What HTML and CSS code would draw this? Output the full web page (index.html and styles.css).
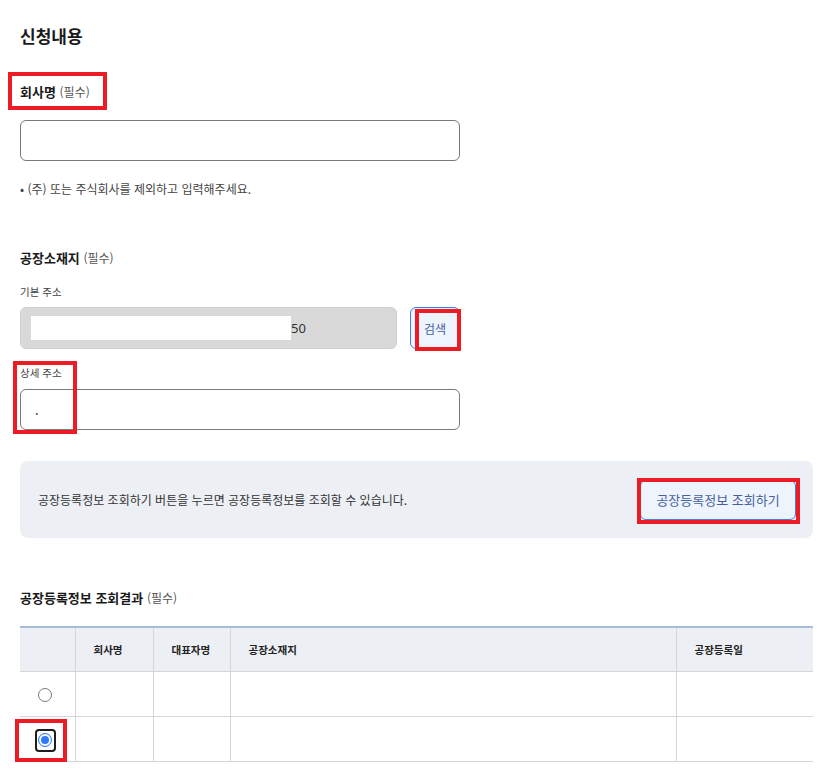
FILE: index.html
```html
<!DOCTYPE html>
<html lang="ko">
<head>
<meta charset="utf-8">
<title>신청내용</title>
<link rel="stylesheet" href="styles.css">
</head>
<body>
<div class="page">
  <h2 class="title">신청내용</h2>

  <div class="label label-company">회사명 <span class="req">(필수)</span></div>
  <div class="input"></div>
  <p class="note">• (주) 또는 주식회사를 제외하고 입력해주세요.</p>

  <div class="label label-factory">공장소재지 <span class="req">(필수)</span></div>
  <div class="sublabel sub-basic">기본 주소</div>
  <div class="addr-row">
    <div class="input input-disabled"><span class="redact"></span><span class="addr-val">50</span></div>
    <button class="btn-search">검색</button>
  </div>
  <div class="sublabel sub-detail">상세 주소</div>
  <div class="input input-detail"><span class="detail-val">.</span></div>

  <div class="panel">
    <span class="panel-text">공장등록정보 조회하기 버튼을 누르면 공장등록정보를 조회할 수 있습니다.</span>
    <button class="btn-lookup">공장등록정보 조회하기</button>
  </div>

  <div class="label label-result">공장등록정보 조회결과 <span class="req">(필수)</span></div>
  <table class="result">
    <colgroup>
      <col class="c-radio"><col class="c-name"><col class="c-rep"><col class="c-addr"><col class="c-date">
    </colgroup>
    <thead>
      <tr><th></th><th>회사명</th><th>대표자명</th><th>공장소재지</th><th>공장등록일</th></tr>
    </thead>
    <tbody>
      <tr><td class="radio-cell"><span class="radio"></span></td><td></td><td></td><td></td><td></td></tr>
      <tr><td class="radio-cell"><span class="focus-ring"><span class="radio radio-on"></span></span></td><td></td><td></td><td></td><td></td></tr>
    </tbody>
  </table>

  <div class="mark mark-1"></div>
  <div class="mark mark-2"></div>
  <div class="mark mark-3"></div>
  <div class="mark mark-4"></div>
  <div class="mark mark-5"></div>
</div>
</body>
</html>
```
FILE: styles.css
```css
* { box-sizing: border-box; }
html, body { margin: 0; padding: 0; background: #fff; }
body {
  font-family: "Noto Sans CJK KR", "Noto Sans", sans-serif;
  color: #222;
}
.page {
  position: relative;
  width: 817px;
  height: 783px;
  padding: 0 4px 0 20px;
  overflow: hidden;
}
.title {
  margin: 0;
  padding-top: 26px;
  font-size: 17px;
  line-height: 20px;
  font-weight: 700;
  color: #1a1a1a;
}
.label {
  font-size: 13px;
  line-height: 18px;
  font-weight: 700;
  color: #1a1a1a;
}
.req {
  font-size: 12px;
  font-weight: 400;
  color: #555;
}
.label-company { margin-top: 37px; }
.input {
  width: 440px;
  height: 41px;
  border: 1px solid #7a7a7a;
  border-radius: 6px;
  background: #fff;
}
.label-company + .input { margin-top: 19px; }
.note {
  margin: 20px 0 0;
  font-size: 12px;
  line-height: 16px;
  color: #444;
}
.label-factory { margin-top: 52px; }
.sublabel {
  font-size: 10.5px;
  line-height: 14px;
  color: #444;
}
.sub-basic { margin-top: 18px; }
.addr-row {
  display: flex;
  gap: 13px;
  margin-top: 8px;
}
.input-disabled {
  width: 377px;
  height: 42px;
  background: #d9d9d9;
  border-color: #cfcfcf;
  display: flex;
  align-items: center;
  padding-left: 10px;
}
.redact {
  display: block;
  width: 260px;
  height: 24px;
  background: #fff;
}
.addr-val {
  font-size: 13px;
  color: #333;
  font-family: "Noto Sans", sans-serif;
}
.btn-search {
  width: 50px;
  height: 42px;
  padding: 0;
  border: 1px solid #3d7ef0;
  border-radius: 6px;
  background: #eef4fe;
  color: #46609c;
  font-family: inherit;
  font-size: 12px;
}
.sub-detail { margin-top: 17px; }
.input-detail {
  margin-top: 9px;
  display: flex;
  align-items: center;
  padding-left: 14px;
}
.detail-val {
  font-size: 13px;
  color: #333;
}
.panel {
  margin-top: 31px;
  height: 77px;
  background: #eceff4;
  border-radius: 8px;
  display: flex;
  align-items: center;
  justify-content: space-between;
  padding: 0 17px 0 18px;
}
.panel-text {
  font-size: 12px;
  color: #333;
}
.btn-lookup {
  width: 156px;
  height: 40px;
  padding: 0;
  border: 1px solid #3d7ef0;
  border-radius: 6px;
  background: #eef4fe;
  color: #46609c;
  font-family: inherit;
  font-size: 13px;
}
.label-result { margin-top: 51px; }
.result {
  margin-top: 19px;
  width: 793px;
  border-collapse: collapse;
  table-layout: fixed;
  border-top: 2px solid #a7bcd7;
}
.c-radio { width: 55px; }
.c-name { width: 78px; }
.c-rep { width: 77px; }
.c-addr { width: 446px; }
.c-date { width: 137px; }
.result th {
  height: 44px;
  background: #eceff4;
  font-size: 10.5px;
  font-weight: 700;
  text-align: left;
  padding: 0 0 0 18px;
  color: #222;
  border-left: 1px solid #d6d6d6;
  border-bottom: 1px solid #d6d6d6;
}
.result td {
  height: 45px;
  border-left: 1px solid #d6d6d6;
  border-bottom: 1px solid #d6d6d6;
  padding: 0;
}
.result th:first-child, .result td:first-child { border-left: none; }
.radio-cell { text-align: center; }
.radio {
  display: inline-block;
  width: 14px;
  height: 14px;
  border: 1px solid #7a7a7a;
  border-radius: 50%;
  vertical-align: middle;
  position: relative;
  top: -1px;
  left: -2px;
}
.focus-ring {
  display: inline-flex;
  align-items: center;
  justify-content: center;
  width: 21px;
  height: 23px;
  border: 2px solid #1c1c1c;
  border-radius: 4px;
  vertical-align: middle;
  position: relative;
  left: -2px;
}
.radio-on {
  flex: none;
  width: 14px;
  height: 14px;
  border: 1.5px solid #2f7bf5;
  box-shadow: inset 0 0 0 2px #fff, inset 0 0 0 7px #2f7bf5;
  top: 0;
  left: 0;
}
.mark {
  position: absolute;
  border: 4px solid #ed1c24;
}
.mark-1 { left: 8px; top: 72px; width: 99px; height: 38px; }
.mark-2 { left: 415px; top: 309px; width: 46px; height: 42px; }
.mark-3 { left: 13px; top: 361px; width: 64px; height: 73px; }
.mark-4 { left: 637px; top: 478px; width: 163px; height: 46px; }
.mark-5 { left: 15px; top: 719px; width: 52px; height: 43px; }
```
